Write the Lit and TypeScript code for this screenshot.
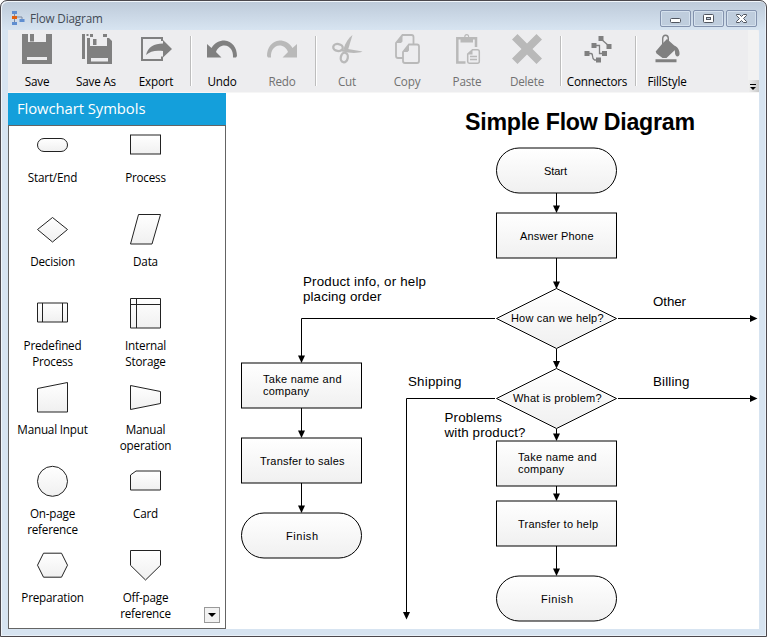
import { LitElement, html, svg, css } from "lit";
import { customElement, property } from "lit/decorators.js";
import { classMap } from "lit/directives/class-map.js";

const icons: Record<string, unknown> = {
  save: svg`<path fill-rule="evenodd" d="M0 0H6V8H24V0H30V30H0ZM5 23V26H25V23Z"/><path d="M8 0H12V7.500H8Z"/>`,
  saveAs: svg`<path d="M1 0H4V25H1ZM5.500 0H7.500V2H5.500ZM9 0H12V3H9ZM22 0H26V3H22Z"/>
    <path fill-rule="evenodd" d="M6 4H9V12H26V4H28L31 7V30H6ZM10 24V27.500H27V24Z"/><path d="M12 5H15.500V11H12Z"/>`,
  exportIcon: svg`<path d="M21 7V4H1V26H21V22.500" fill="none" stroke="currentColor" stroke-width="2"/>
    <path d="M5 21C7 13 13 9.500 22 9.500V6L31 15L22 23.500V17C15 16 9 17 5 21Z"/>`,
  undo: svg`<path d="M0 10L4.500 14C8 8.500 12 6.500 17.500 6.500C25 7 30 13.500 30 22L29 23.500H26C26.500 16.500 23 12 17.500 11.500C13.500 11.500 10.500 14 9 18L14.500 23.500H0Z"/>`,
  cut: svg`<path d="M20.500 1L15.500 17.500L11.500 15C13.500 8.500 16.500 4 20.500 1Z"/>
    <path d="M8 15.500L16 15L30.500 17.500C26 19.500 18 19.300 10 17.500Z"/>
    <g fill="none" stroke="currentColor" stroke-width="2.300"><ellipse cx="6" cy="13.500" rx="4.800" ry="3.500" transform="rotate(10 6 13.500)"/>
    <ellipse cx="12.300" cy="23.500" rx="3.500" ry="4.800" transform="rotate(12 12.300 23.500)"/></g>`,
  copy: svg`<g fill="none" stroke="currentColor" stroke-width="1.800"><path d="M11 24H6Q4 24 4 22V9L10.500 1H19.500Q21.500 1 21.500 3V10"/>
    <path d="M11 18L17 10.500H25Q27 10.500 27 12.500V27Q27 29 25 29H13Q11 29 11 27Z"/></g><path d="M10.500 1V7.500L9 9H4ZM17 10.500V16.500L15.500 18H11Z"/>`,
  paste: svg`<path d="M13.500 28.500H5.300V4.300H24V13" fill="none" stroke="currentColor" stroke-width="2.500"/>
    <path fill-rule="evenodd" d="M8.500 3H12.200Q12.200 0 14.700 0T17.200 3H21V8.500H8.500ZM13.500 3.500H16V2Q14.700 0.500 13.500 2Z"/>
    <g fill="none" stroke="currentColor" stroke-width="1.500"><path d="M15.700 20L20.500 15.700H25.500Q27.300 15.700 27.300 17.500V27.500Q27.300 29.200 25.500 29.200H17.300Q15.700 29.200 15.700 27.500ZM18 22.500H25M18 25.500H25"/></g><path d="M20.500 15.700V20.500H15.700Z"/>`,
  del: svg`<path d="M5.500 0L15 9.500L24.500 0L30 5.500L20.500 15L30 24.500L24.500 30L15 20.500L5.500 30L0 24.500L9.500 15L0 5.500Z"/>`,
  connectors: svg`<g transform="translate(2 0)"><path d="M14.500 2H19.500V7H14.500ZM22.500 10H27.500V15H22.500ZM7.500 9H12.500V14H7.500ZM18 17H23V22H18ZM0.500 17H5.500V22H0.500ZM12 23.500H17V28.500H12Z"/>
    <path d="M17 5L25 12M10 11.500H15.500V19.500H20M3 19.500H7Q8.500 19.500 8.500 22T10.500 26H14" fill="none" stroke="currentColor" stroke-width="1.300"/></g>`,
  fill: svg`<path d="M3.500 25.300H24.500V28.200H3.500ZM3.700 17.500L10 10L15 5L25 14L14.500 24H10.500L4.500 19.500Z"/>
    <path d="M21.500 11.500C26 12.500 28 17 27.500 20.500C26.500 24 22.500 22.500 23 18Z"/>
    <path d="M10.700 10V4.500Q10.700 1.300 13.500 1.300T16.300 4.500V9" fill="none" stroke="currentColor" stroke-width="1.400"/>`,
};

@customElement("tool-button")
class ToolButton extends LitElement {
  @property() label = "";
  @property() icon = "";
  @property({ type: Boolean }) off = false;
  @property({ type: Boolean }) mirror = false;
  static styles = css`
    :host { display: block; width: 60px; flex: none; }
    :host([wide]) { width: 70px; }
    .tool { display: flex; flex-direction: column; align-items: center; padding-top: 4px; color: #808080; }
    .tool.off { color: #b9b9b9; }
    svg { width: 30px; height: 30px; overflow: visible; fill: currentColor; }
    .mirror svg { transform: scaleX(-1); }
    span { margin-top: 9px; font: 11.7px/16px "Open Sans", "Noto Sans", sans-serif; letter-spacing: -0.2px; color: #000; white-space: nowrap; }
    .off span { color: #717171; }
  `;
  render() {
    return html`<div class=${classMap({ tool: true, off: this.off, mirror: this.mirror })}>
      <svg viewBox="0 0 30 30">${icons[this.icon]}</svg><span>${this.label}</span>
    </div>`;
  }
}

const symbols: { name: string; shape: unknown }[] = [
  { name: "Start/End", shape: svg`<rect x="0.500" y="8.500" width="30" height="13" rx="6.500"/>` },
  { name: "Process", shape: svg`<rect x="0.500" y="5" width="30" height="19"/>` },
  { name: "Decision", shape: svg`<path d="M15.500 3.500L30.500 15.500L15.500 28L0.500 15.500Z"/>` },
  { name: "Data", shape: svg`<path d="M8.500 0.500H30.500L22 30H0.500Z"/>` },
  { name: "Predefined Process", shape: svg`<path d="M0.500 5H30.500V24H0.500ZM5.500 5V24M25.500 5V24"/>` },
  { name: "Internal Storage", shape: svg`<path d="M0.500 0.500H30.500V30H0.500ZM6.500 0.500V30M0.500 6.500H30.500"/>` },
  { name: "Manual Input", shape: svg`<path d="M0.500 6.500L30.500 0.500V30H0.500Z"/>` },
  { name: "Manual operation", shape: svg`<path d="M0.500 3.500L30.500 9.500V21.500L0.500 27.500Z"/>` },
  { name: "On-page reference", shape: svg`<circle cx="15.500" cy="15.300" r="15"/>` },
  { name: "Card", shape: svg`<path d="M6 5H30.500V24H0.500V9Z"/>` },
  { name: "Preparation", shape: svg`<path d="M6.500 3.200H24.500L30.500 15.200L24.500 27.200H6.500L0.500 15.200Z"/>` },
  { name: "Off-page reference", shape: svg`<path d="M0.500 0.500H30.500V15.300L15.500 30L0.500 15.300Z"/>` },
];

@customElement("symbol-palette")
class SymbolPalette extends LitElement {
  static styles = css`
    :host { display: flex; flex-direction: column; width: 218px; flex: none; font-family: "Open Sans", "Noto Sans", sans-serif; }
    .head { height: 32px; padding-left: 9px; background: #149fdb; color: #fff; font-size: 14.8px; line-height: 31px; letter-spacing: -0.05px; }
    .list { flex: 1; min-height: 0; box-sizing: border-box; border: 1px solid #646464; background: #fff; position: relative;
      display: grid; grid-template-columns: 87px 99px; grid-auto-rows: 84px; overflow: hidden; }
    .cell { display: flex; flex-direction: column; align-items: center; padding-top: 4px; }
    svg { width: 31px; height: 32px; overflow: visible; fill: url(#shade); stroke: #222; }
    .name { margin-top: 7px; max-width: 76px; text-align: center; font-size: 11.7px; line-height: 16px; letter-spacing: -0.2px; color: #000; }
    .more { position: absolute; right: 5px; bottom: 5px; width: 16px; height: 16px; box-sizing: border-box; border: 1px solid #999; background: #f2f2f2;
      display: flex; align-items: center; justify-content: center; }
    .more::after { content: ""; border: 4px solid transparent; border-top-color: #000; border-bottom: 0; }
  `;
  render() {
    return html`<div class="head">Flowchart Symbols</div>
      <div class="list">
        ${symbols.map((s) => html`<div class="cell">
          <svg viewBox="0 0 31 32"><defs><linearGradient id="shade" x2="0" y2="1"><stop stop-color="#fff"/><stop offset="1" stop-color="#f0f0f0"/></linearGradient></defs>${s.shape}</svg>
          <div class="name">${s.name}</div></div>`)}
        <div class="more"></div>
      </div>`;
  }
}

type Words = [text: string, x: number, y: number, width: number];

const boxes: [x: number, y: number, rx: number][] = [
  [496.5, 148, 22.5], [496.5, 213, 0], [496.5, 441, 0], [496.5, 501, 0], [496.5, 576, 22.5],
  [241.5, 363, 0], [241.5, 438, 0], [241.5, 513, 22.5],
];
const nodeWords: Words[] = [
  ["Start", 544, 175, 23], ["Answer Phone", 520, 240, 73.5], ["How can we help?", 511, 322, 92.5],
  ["What is problem?", 513, 402, 88.5], ["Take name and", 518, 461, 78.5], ["company", 518, 473, 46],
  ["Transfer to help", 518, 528, 80], ["Finish", 541, 603, 32], ["Take name and", 263, 383, 78.5],
  ["company", 263, 395, 46], ["Transfer to sales", 260, 465, 84.5], ["Finish", 286, 540, 32],
];
const linkWords: Words[] = [
  ["Product info, or help", 303, 286, 123], ["placing order", 303, 301, 78.5], ["Other", 653, 306, 33],
  ["Shipping", 408, 386, 53.5], ["Billing", 653, 386, 36.5], ["Problems", 444.5, 422, 57.5], ["with product?", 444.5, 437, 81],
];
const links = [
  "M556.5 193V206", "M556.5 258V282", "M556.5 349V362", "M556.5 429V434", "M556.5 486V494", "M556.5 546V569",
  "M495 318.5H301.5V356", "M301.5 408V431", "M301.5 483V506", "M618 318.5H751", "M618 398.5H751", "M495 398.5H406.5V613",
];
const downHeads = [[556.5, 213], [556.5, 289], [556.5, 368.5], [556.5, 441], [556.5, 501], [556.5, 576], [301.5, 363], [301.5, 438], [301.5, 513], [406.5, 619.5]];

@customElement("flow-canvas")
class FlowCanvas extends LitElement {
  static styles = css`
    :host { display: block; flex: 1; background: #fff; min-width: 0; }
    svg { display: block; width: 533px; height: 536px; font-family: "Liberation Sans", Arial, sans-serif; }
    .node { fill: url(#tone); stroke: #000; }
    .link { fill: none; stroke: #000; }
    .title { font-size: 23.2px; font-weight: 700; }
    .small { font-size: 11px; }
    .large { font-size: 13.33px; }
  `;
  private words(list: Words[], cls: string) {
    return list.map(([t, x, y, w]) => svg`<text class=${cls} x=${x} y=${y} textLength=${w}>${t}</text>`);
  }
  render() {
    return html`<svg viewBox="226 93 533 536">
      <defs><linearGradient id="tone" x2="0" y2="1"><stop stop-color="#fff"/><stop offset="1" stop-color="#f0f0f0"/></linearGradient></defs>
      ${links.map((d) => svg`<path class="link" d=${d}/>`)}
      ${boxes.map(([x, y, r]) => svg`<rect class="node" x=${x} y=${y} width="120" height="45" rx=${r}/>`)}
      ${[318.5, 398.5].map((y) => svg`<path class="node" d="M556.5 ${y - 30}L616.5 ${y}L556.5 ${y + 30}L496.5 ${y}Z"/>`)}
      ${downHeads.map(([x, y]) => svg`<path d="M${x - 3.5} ${y - 7.5}h7l-3.500 7.500z"/>`)}
      ${[318.5, 398.5].map((y) => svg`<path d="M750 ${y - 3.5}v7l7.500 -3.500z"/>`)}
      <text class="title" x="465" y="130" textLength="230">Simple Flow Diagram</text>
      ${this.words(nodeWords, "small")}${this.words(linkWords, "large")}
    </svg>`;
  }
}

@customElement("app-root")
class AppRoot extends LitElement {
  static styles = css`
    :host { display: block; background: #fff; }
    .window { box-sizing: border-box; width: 767px; height: 637px; border: 1px solid #4b484d; border-radius: 7px 7px 0 0; padding: 0 7px 7px;
      background: linear-gradient(#bdcad9, #d7e4f1 29px); box-shadow: inset 1px 1px #f1f6fb, inset -1px -1px #e9f1f9; display: flex; flex-direction: column; }
    .title { height: 29px; flex: none; display: flex; align-items: center; padding: 6px 2px 0 3px; box-sizing: border-box; }
    .logo { width: 14px; height: 16px; margin: 0 5px 1px 0; }
    .caption { flex: 1; margin-bottom: 2px; font: 11.7px/16px "Open Sans", "Noto Sans", sans-serif; letter-spacing: -0.15px; color: #434b55; }
    .controls { display: flex; gap: 2px; }
    .control { width: 31px; height: 17px; box-sizing: border-box; border: 1px solid #8392ad; border-radius: 2px; box-shadow: inset 0 0 0 1px #d5e1ee; background: #bfcddd; }
    .control svg { display: block; width: 29px; height: 15px; fill: #fff; stroke: #50555f; }
    .tools { height: 63px; flex: none; display: flex; background: #ededef; border-bottom: 1px solid #f6f6f6; box-sizing: border-box; }
    .tools tool-button:first-child { width: 58px; }
    .rule { width: 5px; flex: none; display: flex; justify-content: flex-end; padding-top: 6px; box-sizing: border-box; }
    .rule.early { width: 6px; }
    .rule::before { content: ""; width: 1px; height: 50px; background: #bdbdbd; border-right: 1px solid #fff; }
    .grip { margin-left: auto; width: 11px; border-radius: 0 3px 0 0; background: #f2f2f2; display: flex; align-items: flex-end; }
    .grip svg { width: 11px; height: 12px; background: linear-gradient(90deg, #f0f0f0, #c8c8c8); }
    .body { flex: 1; min-height: 0; display: flex; }
  `;
  render() {
    return html`<div class="window">
      <div class="title">
        <svg class="logo" viewBox="0 0 14 16"><path d="M3.500 2V14M4 7H11V10" fill="none" stroke="#7c8aa2"/>
          <path fill="#5f8ed0" d="M1 1H6V4H1ZM1 12H6V15H1ZM8.500 9H13.500V12H8.500Z"/><path fill="#e2600f" d="M1 6H6V9H1Z"/></svg>
        <div class="caption">Flow Diagram</div>
        <div class="controls">
          <div class="control"><svg viewBox="0 0 29 15"><rect x="9.500" y="7.500" width="10" height="4" rx="1"/></svg></div>
          <div class="control"><svg viewBox="0 0 29 15"><rect x="9.500" y="3.500" width="10" height="8" rx="1"/><rect x="12.500" y="6.500" width="4" height="2" fill="#bfcddd"/></svg></div>
          <div class="control"><svg viewBox="0 0 29 15"><path d="M9.500 3.500H12.500L14.500 5.500L16.500 3.500H19.500V4.500L16.500 7.500L19.500 10.500V11.500H16.500L14.500 9.500L12.500 11.500H9.500V10.500L12.500 7.500L9.500 4.500Z"/></svg></div>
        </div>
      </div>
      <div class="tools">
        <tool-button label="Save" icon="save"></tool-button>
        <tool-button label="Save As" icon="saveAs"></tool-button>
        <tool-button label="Export" icon="exportIcon"></tool-button>
        <div class="rule early"></div>
        <tool-button label="Undo" icon="undo"></tool-button>
        <tool-button label="Redo" icon="undo" off mirror></tool-button>
        <div class="rule"></div>
        <tool-button label="Cut" icon="cut" off></tool-button>
        <tool-button label="Copy" icon="copy" off></tool-button>
        <tool-button label="Paste" icon="paste" off></tool-button>
        <tool-button label="Delete" icon="del" off></tool-button>
        <div class="rule"></div>
        <tool-button wide label="Connectors" icon="connectors"></tool-button>
        <div class="rule"></div>
        <tool-button label="FillStyle" icon="fill"></tool-button>
        <div class="grip"><svg viewBox="0 0 11 12"><path d="M2 4.500H8" stroke="#000"/><path d="M2 7H8L5 10Z"/></svg></div>
      </div>
      <div class="body"><symbol-palette></symbol-palette><flow-canvas></flow-canvas></div>
    </div>`;
  }
}
